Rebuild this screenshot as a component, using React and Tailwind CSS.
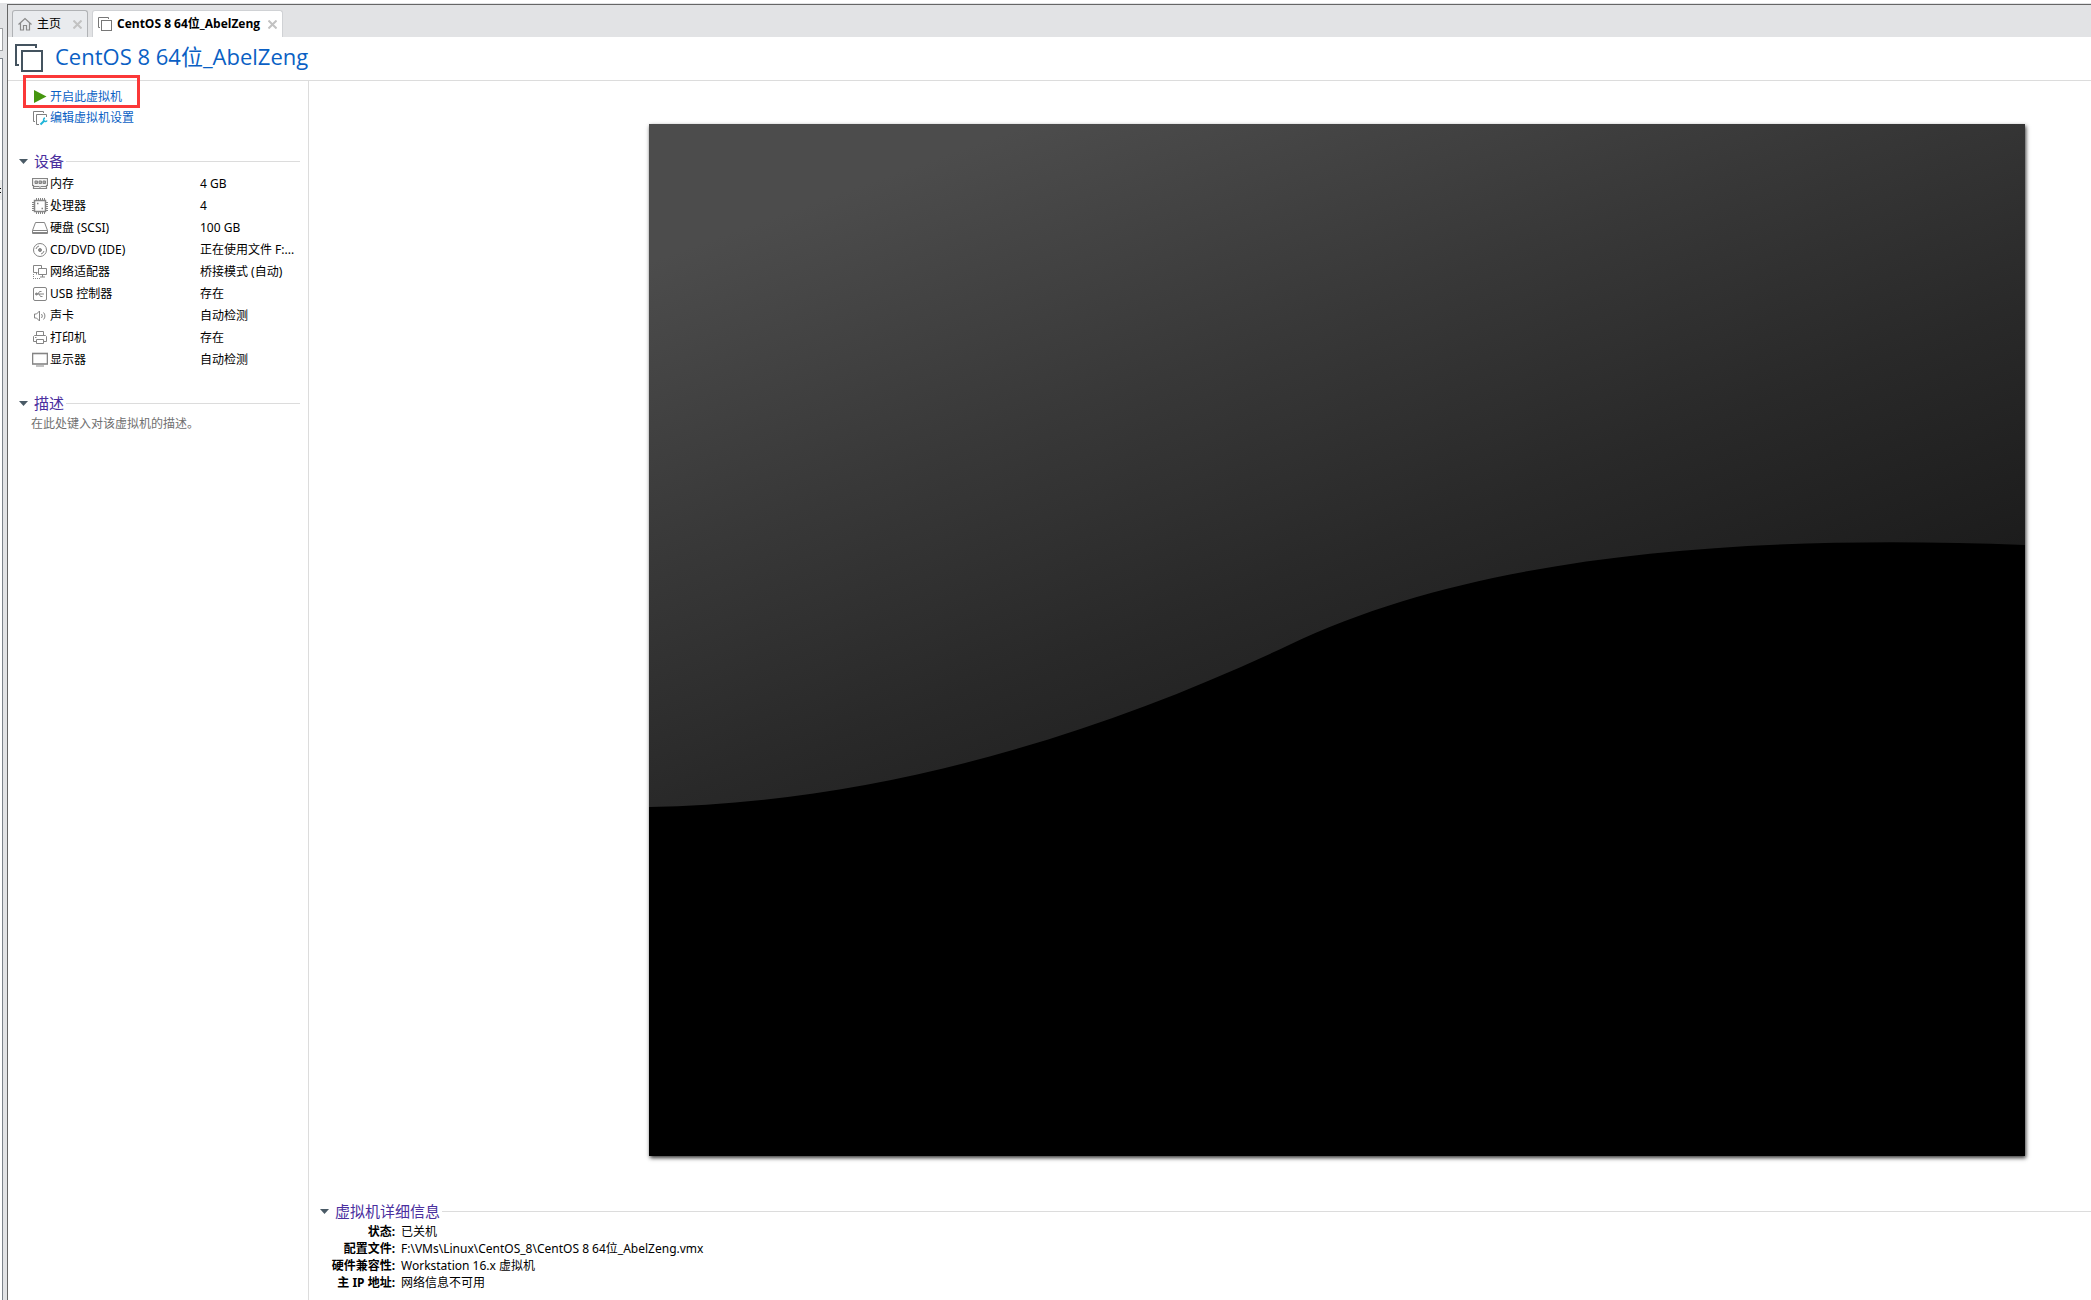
import React, { useState } from "react";

const devices = [
  { icon: "memory", name: "内存", value: "4 GB" },
  { icon: "cpu", name: "处理器", value: "4" },
  { icon: "disk", name: "硬盘 (SCSI)", value: "100 GB" },
  { icon: "disc", name: "CD/DVD (IDE)", value: "正在使用文件 F:..." },
  { icon: "network", name: "网络适配器", value: "桥接模式 (自动)" },
  { icon: "usb", name: "USB 控制器", value: "存在" },
  { icon: "sound", name: "声卡", value: "自动检测" },
  { icon: "printer", name: "打印机", value: "存在" },
  { icon: "display", name: "显示器", value: "自动检测" },
];

const details = [
  { label: "状态:", value: "已关机" },
  {
    label: "配置文件:",
    value: "F:\\VMs\\Linux\\CentOS_8\\CentOS 8 64位_AbelZeng.vmx",
  },
  { label: "硬件兼容性:", value: "Workstation 16.x 虚拟机" },
  { label: "主 IP 地址:", value: "网络信息不可用" },
];

const deviceShapes = {
  memory: (
    <>
      <path d="M0.5 2.5h15v7h-1v3h-13v-3h-1z" fill="#f4f4f4" strokeWidth="1.2" />
      <path d="M3 5h2.5v2.5H3zM7 5h2.5v2.5H7zM11 5h2.5v2.5H11z" fill="#aaa" />
      <path d="M2 10.5h5M9 10.5h5M8 10v2.5" />
    </>
  ),
  cpu: (
    <>
      <rect x="2.5" y="2.5" width="11" height="11" strokeWidth="1.5" />
      <path d="M4.5 0v2M6.5 0v2M8.5 0v2M10.5 0v2M12.5 0v2M4.5 14v2M6.5 14v2M8.5 14v2M10.5 14v2M12.5 14v2M0 4.5h2M0 6.5h2M0 8.5h2M0 10.5h2M0 12.5h2M14 4.5h2M14 6.5h2M14 8.5h2M14 10.5h2M14 12.5h2" />
      <path d="M5 5.500h1.500M9.500 10.500H11" strokeWidth="1.4" />
    </>
  ),
  disk: (
    <>
      <path d="M3.5 2.5h9l3 8v3H0.5v-3z" />
      <path d="M0.5 10.5h15M1 12.5h14" />
    </>
  ),
  disc: (
    <>
      <circle cx="8" cy="8" r="6.5" />
      <circle cx="8" cy="8" r="1.5" fill="#8a8a8a" />
      <path d="M4 7a4 4 0 0 1 3-3M12 9a4 4 0 0 1-3 3" />
    </>
  ),
  network: (
    <>
      <path d="M5.5 8.500h-4v-7h8v3M4.500 8.500v2" />
      <path d="M6.500 4.5h8v6h-8zM10.500 10.5v2.500M8 13h5" />
      <path d="M1.5 10v5M3 14.5h6" strokeDasharray="1 1" />
    </>
  ),
  usb: (
    <>
      <rect x="1.5" y="1.5" width="13" height="13" rx="1.5" />
      <path d="M4 8h8M6 8l1.5-2.5H9.500M7 8l1.5 2.5H10.500" />
      <circle cx="4.5" cy="8" r="1" fill="#8a8a8a" />
    </>
  ),
  sound: (
    <>
      <path d="M2.5 6v4h2l3 3V3l-3 3z" />
      <path d="M9.5 6a3 3 0 0 1 0 4M11.500 4.5a5 5 0 0 1 0 7" />
    </>
  ),
  printer: (
    <>
      <path d="M4.5 5.5v-4h7v4" />
      <path d="M4 11.5H1.5v-5l1-1h11l1 1v5H12" />
      <path d="M4.5 9.5h7v4h-7zM3 7.5h1.5" />
    </>
  ),
  display: (
    <>
      <rect x="0.5" y="1.5" width="15" height="10.500" strokeWidth="1.6" />
      <path d="M4 14h8" />
    </>
  ),
};

const DeviceIcon = ({ type }) => (
  <svg
    className="size-4 shrink-0"
    viewBox="0 0 16 16"
    fill="none"
    stroke="#858585"
    aria-hidden="true"
  >
    {deviceShapes[type]}
  </svg>
);

const MachineIcon = ({ className }) => (
  <svg
    className={className}
    viewBox="0 0 14 14"
    fill="none"
    stroke="currentColor"
    aria-hidden="true"
  >
    <path d="M2 10.5H0.5v-10h10V2" />
    <rect x="3.5" y="3.5" width="10" height="10" />
  </svg>
);

const CloseIcon = () => (
  <svg
    className="size-[9px]"
    viewBox="0 0 9 9"
    stroke="#c2c2c2"
    strokeWidth="2"
    aria-hidden="true"
  >
    <path d="M0.5 0.5l8 8M8.5 0.5l-8 8" />
  </svg>
);

const SectionHeading = ({ title, open, onToggle }) => (
  <h2 className="flex h-5 items-center text-[15px] text-[#4a2f9e]">
    <button type="button" className="flex items-center" onClick={onToggle}>
      <svg
        className={
          open
            ? "mr-[6px] h-[5px] w-[9px]"
            : "mr-[6px] h-[5px] w-[9px] -rotate-90"
        }
        viewBox="0 0 9 5"
        fill="#4a5a66"
        aria-hidden="true"
      >
        <path d="M0 0h9L4.5 5z" />
      </svg>
      {title}
    </button>
    <span className="ml-[2px] h-px flex-1 bg-[#dcdcdc]" />
  </h2>
);

const TabBar = () => (
  <nav className="flex h-8 items-end gap-1 bg-[#e2e3e5] pl-1 font-['Open_Sans','Noto_Sans_CJK_SC',sans-serif]">
    <div className="flex h-[27px] items-center rounded-t-[3px] border border-b-0 border-[#b0b2b5] bg-[#e9ebee] px-[5px]">
      <button type="button" className="flex items-center gap-[5px]">
        <svg
          className="size-[14px]"
          viewBox="0 0 14 14"
          fill="none"
          stroke="#8a8a8a"
          strokeWidth="1.2"
          aria-hidden="true"
        >
          <path d="M0.5 7.5L7 1.5l6.5 6M2.5 6v7h3V8.5h3V13h3V6" />
        </svg>
        主页
      </button>
      <button type="button" className="ml-3" aria-label="关闭">
        <CloseIcon />
      </button>
    </div>
    <div className="flex h-[27px] items-center rounded-t-[3px] border border-b-0 border-[#d0d2d5] bg-white px-[5px]">
      <button type="button" className="flex items-center gap-[5px] font-bold">
        <MachineIcon className="size-[14px] text-[#777]" />
        CentOS 8 64位_AbelZeng
      </button>
      <button type="button" className="ml-2" aria-label="关闭">
        <CloseIcon />
      </button>
    </div>
  </nav>
);

const Sidebar = () => {
  const [showDevices, setShowDevices] = useState(true);
  const [showDescription, setShowDescription] = useState(true);

  return (
    <aside className="w-[301px] shrink-0 border-r border-[#dcdcdc] pr-2">
      <div className="relative flex flex-col items-start pt-[5px] pl-6 text-[#0a5fc4]">
        <span className="pointer-events-none absolute -top-[6px] left-[15px] h-[33px] w-[117px] border-3 border-[#fb3838]" />
        <button type="button" className="flex h-[21px] items-center gap-[2px]">
          <svg className="size-4" viewBox="0 0 16 16" aria-hidden="true">
            <path d="M2 1L14.5 7.5 2 14z" fill="#45960f" />
          </svg>
          开启此虚拟机
        </button>
        <button type="button" className="flex h-[22px] items-center gap-[2px]">
          <svg
            className="size-4"
            viewBox="0 0 16 16"
            fill="none"
            stroke="#808080"
            aria-hidden="true"
          >
            <path d="M3 11.5H1.5v-10h10V3" />
            <path d="M7 14.5H4.5v-10h10V7" />
            <path d="M8.5 14.5l4-4" stroke="#1fb5d8" strokeWidth="2" />
            <path
              d="M13 8a1.8 1.8 0 1 0 2 2.5"
              stroke="#1fb5d8"
              strokeWidth="1.5"
            />
          </svg>
          编辑虚拟机设置
        </button>
      </div>

      <section className="mt-[22px] pl-[11px]">
        <SectionHeading
          title="设备"
          open={showDevices}
          onToggle={() => setShowDevices(!showDevices)}
        />
        {showDevices && (
          <table className="mt-[2px] ml-[13px] w-[268px] table-fixed">
            <tbody>
              {devices.map((device) => (
                <tr key={device.icon} className="h-[22px]">
                  <th scope="row" className="w-[168px] p-0 text-left font-normal">
                    <span className="flex items-center gap-[2px]">
                      <DeviceIcon type={device.icon} />
                      {device.name}
                    </span>
                  </th>
                  <td className="p-0 whitespace-nowrap">{device.value}</td>
                </tr>
              ))}
            </tbody>
          </table>
        )}
      </section>

      <section className="mt-[22px] pl-[11px]">
        <SectionHeading
          title="描述"
          open={showDescription}
          onToggle={() => setShowDescription(!showDescription)}
        />
        {showDescription && (
          <p className="mt-[3px] ml-3 text-[#707070]">
            在此处键入对该虚拟机的描述。
          </p>
        )}
      </section>
    </aside>
  );
};

const Screen = () => (
  <svg
    className="aspect-[4/3] w-full bg-black shadow-[1px_2px_4px_rgba(0,0,0,0.8)]"
    viewBox="0 0 1376 1032"
    role="img"
    aria-label="CentOS 8 64位_AbelZeng"
  >
    <defs>
      <linearGradient
        id="glow"
        gradientUnits="userSpaceOnUse"
        x1="44"
        y1="122"
        x2="294"
        y2="812"
      >
        <stop offset="0" stopColor="#4c4c4c" />
        <stop offset="0.386" stopColor="#383838" />
        <stop offset="0.695" stopColor="#292929" />
        <stop offset="1" stopColor="#1c1c1c" />
      </linearGradient>
    </defs>
    <path
      d="M0 0H1376V421C1120 411 840 425 640 521C430 620 210 680 0 683Z"
      fill="url(#glow)"
    />
  </svg>
);

const MachineDetails = () => {
  const [open, setOpen] = useState(true);

  return (
    <section className="mt-[45px] pl-[11px]">
      <SectionHeading
        title="虚拟机详细信息"
        open={open}
        onToggle={() => setOpen(!open)}
      />
      {open && (
        <dl className="mt-[2px] grid grid-cols-[75px_1fr] gap-x-[6px] leading-[17px]">
          {details.map((item) => (
            <React.Fragment key={item.label}>
              <dt className="text-right font-bold whitespace-nowrap">
                {item.label}
              </dt>
              <dd>{item.value}</dd>
            </React.Fragment>
          ))}
        </dl>
      )}
    </section>
  );
};

const App = () => {
  return (
    <div className="flex min-h-screen flex-col bg-white pt-[3px] font-['Noto_Sans','Noto_Sans_CJK_SC',sans-serif] text-xs leading-4 text-black">
      <div className="flex flex-1 bg-[#e2e3e5]">
        {/* edge of the library panel */}
        <div className="flex w-[7px] shrink-0 flex-col gap-[7px] pt-[25px] pr-1">
          <div className="h-[23px] border border-l-0 border-[#a0a2a5] bg-white" />
          <div className="flex-1 border border-b-0 border-l-0 border-[#7d848c] bg-white pt-[121px]">
            <div className="flex h-5 flex-col justify-center gap-[3px] bg-[#ececec]">
              <span className="h-px w-px bg-black" />
              <span className="h-px w-px bg-black" />
            </div>
          </div>
        </div>
        <div className="mt-px flex min-w-0 flex-1 flex-col border-t border-l border-[#666] bg-white">
          <TabBar />
          <header className="flex h-11 items-center gap-3 border-b border-[#dcdcdc] pb-[2px] pl-[7px]">
            <MachineIcon className="size-7 text-[#44535f]" />
            <h1 className="pb-1 font-['Open_Sans','Noto_Sans_CJK_SC',sans-serif] text-[22px] leading-7 text-[#0a5fc4]">
              CentOS 8 64位_AbelZeng
            </h1>
          </header>
          <div className="flex flex-1">
            <Sidebar />
            <main className="min-w-0 flex-1">
              <div className="pt-[43px] pr-[66px] pl-[340px]">
                <Screen />
              </div>
              <MachineDetails />
            </main>
          </div>
        </div>
      </div>
    </div>
  );
};

export default App;
